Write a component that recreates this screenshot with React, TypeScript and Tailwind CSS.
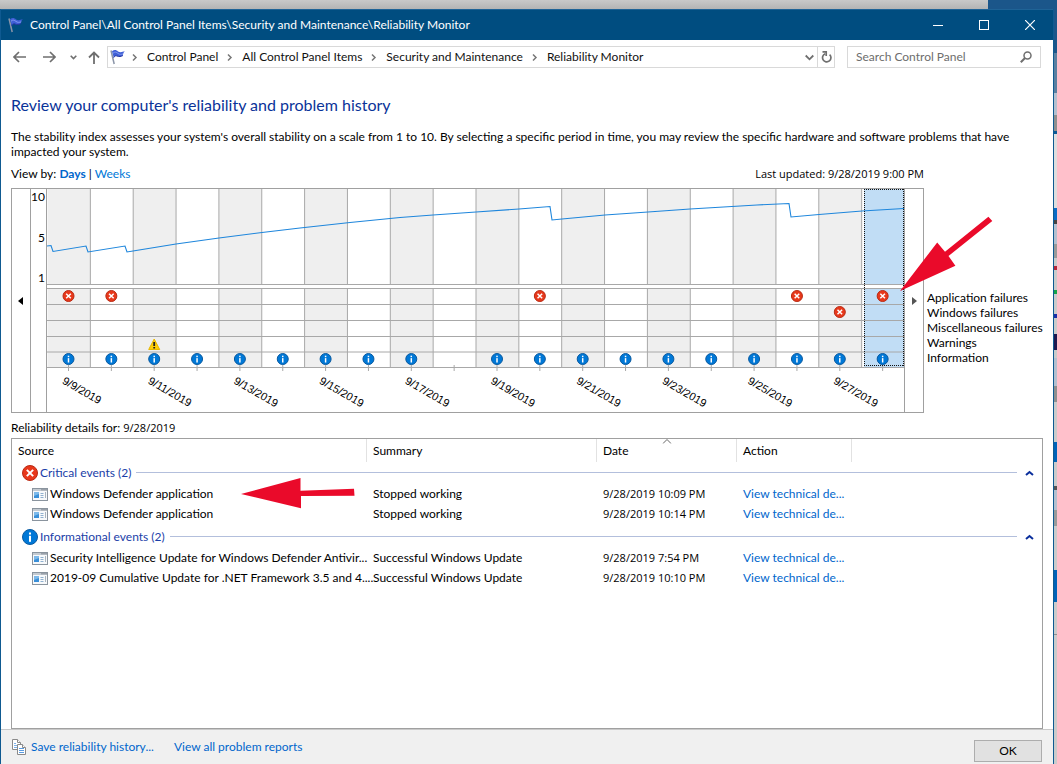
import React from 'react';

type EventRow = { source: string; summary: string; date: string };

const crumbs = ['Control Panel', 'All Control Panel Items', 'Security and Maintenance', 'Reliability Monitor'];

const legend = ['Application failures', 'Windows failures', 'Miscellaneous failures', 'Warnings', 'Information'];

const criticalEvents: EventRow[] = [
  { source: 'Windows Defender application', summary: 'Stopped working', date: '9/28/2019 10:09 PM' },
  { source: 'Windows Defender application', summary: 'Stopped working', date: '9/28/2019 10:14 PM' },
];

const infoEvents: EventRow[] = [
  {
    source: 'Security Intelligence Update for Windows Defender Antivir...',
    summary: 'Successful Windows Update',
    date: '9/28/2019 7:54 PM',
  },
  {
    source: '2019-09 Cumulative Update for .NET Framework 3.5 and 4....',
    summary: 'Successful Windows Update',
    date: '9/28/2019 10:10 PM',
  },
];

// Chart geometry, in viewBox units
const COLUMN = 42.85;
const DAYS = Array.from({ length: 20 }, (_, i) => i);
const ROW_LINES = [99.5, 115.5, 131.5, 147.5, 163, 178.5];
const APP_FAILURES = [0, 1, 11, 17, 19];
const WINDOWS_FAILURES = [18];
const WARNINGS = [2];
const NO_INFO = [9];

const STABILITY =
  '0,57 4,56.5 6,62.5 39,57 41,63 78,57 80,63 86,62 129,55 172,49 215,43.5 253,39 303,33.5 353,28.5 386,26 429,23 472,20 503,17.5 505,31 515,30 558,26 601,23 643,20 710,16 742,14.5 744,28 772,25.5 815,22 857,19.5';

const columnX = (i: number) => 0.5 + i * COLUMN;
const centerX = (i: number) => columnX(i) + 21;

function FlagIcon() {
  return (
    <svg width="16" height="16" viewBox="0 0 16 16" className="shrink-0" aria-hidden="true">
      <path d="M1 1.500 4.200 15" stroke="#8b95a8" strokeWidth="1.500" fill="none" />
      <path d="M2 2.200C4.500.2 6.500 1 8 2.400c1.800 1.200 4 .8 6.800-.1-1.400 1.200-2 2.400-1.900 4.200-2 1.200-4 1.400-5.800.5C5.800 6.300 4.700 7 3.800 9z" fill="#3f5fd6" />
      <path d="M3 4.200c2-1.800 3.500-1 5 .2s3.400 1.200 5.300.4" stroke="#8098f0" strokeWidth="1" fill="none" />
      <path d="M3.700 8.500c1-1.800 2-2 3.300-1.500 2 .9 4 .7 5.900-.5" stroke="#2638a3" strokeWidth="1" fill="none" />
    </svg>
  );
}

function CriticalIcon({ x = 8, y = 8, r = 7.5 }: { x?: number; y?: number; r?: number }) {
  const d = r * 0.42;
  return (
    <g>
      <circle cx={x} cy={y} r={r} fill="#e8381b" stroke="#b92b14" strokeWidth="1" />
      <path
        d={`M${x - d} ${y - d}L${x + d} ${y + d}M${x + d} ${y - d}L${x - d} ${y + d}`}
        stroke="#fff"
        strokeWidth={r * 0.27}
      />
    </g>
  );
}

function InfoIcon({ x = 8, y = 8, r = 7.5 }: { x?: number; y?: number; r?: number }) {
  const w = r * 0.27;
  return (
    <g>
      <circle cx={x} cy={y} r={r} fill="#0078d7" stroke="#0a5aa0" strokeWidth="1" />
      <rect x={x - w / 2} y={y - r * 0.16} width={w} height={r * 0.8} fill="#fff" />
      <rect x={x - w / 2} y={y - r * 0.6} width={w} height={w} fill="#fff" />
    </g>
  );
}

function AppIcon() {
  return (
    <svg width="16" height="13" viewBox="0 0 16 13" className="shrink-0" aria-hidden="true">
      <rect x=".5" y=".5" width="15" height="12" fill="#f7f9fb" stroke="#8a949e" />
      <path d="M1 2h14" stroke="#c3cad1" strokeWidth="2" />
      <path d="M9.500 1.800h1M11.500 1.800h1M13.500 1.800h1" stroke="#4a5560" />
      <rect x="2" y="4" width="5" height="6" fill="#3a8fd8" />
      <path d="M2 4h5v2L2 8z" fill="#7cb9ea" />
      <path d="M8.500 5.500h3M8.500 7.500h3M8.500 9.500h3" stroke="#8fb0cf" />
      <path d="M13.500 4v6" stroke="#a9b4be" />
    </svg>
  );
}

function Crumb({ label }: { label: string }) {
  return (
    <li className="flex items-center gap-2">
      <svg width="9" height="9" viewBox="0 0 9 9" fill="none" stroke="#777" strokeWidth="1.500" aria-hidden="true">
        <path d="M3 1.500 6 4.500 3 7.500" />
      </svg>
      <a href="#" className="text-[#111]">
        {label}
      </a>
    </li>
  );
}

function TitleBar() {
  return (
    <header className="flex h-[31px] items-center border-t border-[#1f6396] bg-[#004d80] text-white">
      <div className="flex flex-1 items-center gap-1.5 pl-[7px]">
        <FlagIcon />
        <span>Control Panel\All Control Panel Items\Security and Maintenance\Reliability Monitor</span>
      </div>
      <button type="button" aria-label="Minimize" className="flex h-full w-[46px] items-center justify-center">
        <svg width="10" height="11" viewBox="0 0 10 11" stroke="#fff">
          <path d="M0 5.500h10" />
        </svg>
      </button>
      <button type="button" aria-label="Maximize" className="flex h-full w-[46px] items-center justify-center">
        <svg width="10" height="10" viewBox="0 0 10 10" stroke="#fff" fill="none">
          <rect x=".5" y=".5" width="9" height="9" />
        </svg>
      </button>
      <button type="button" aria-label="Close" className="flex h-full w-[46px] items-center justify-center">
        <svg width="10" height="10" viewBox="0 0 10 10" stroke="#fff" strokeWidth="1.200">
          <path d="M0 0l10 10M10 0 0 10" />
        </svg>
      </button>
    </header>
  );
}

function NavBar() {
  return (
    <nav className="flex h-[34px] items-center pr-3 pl-3">
      <div className="flex items-center text-[#6f6f6f]">
        <button type="button" aria-label="Back" className="flex w-[14px] justify-start">
          <svg width="13" height="12" viewBox="0 0 13 12" fill="none" stroke="currentColor" strokeWidth="1.700">
            <path d="M13 6H1M6 1 1 6l5 5" />
          </svg>
        </button>
        <button type="button" aria-label="Forward" className="ml-4 flex w-[14px] justify-start">
          <svg width="13" height="12" viewBox="0 0 13 12" fill="none" stroke="currentColor" strokeWidth="1.700">
            <path d="M0 6h12M7 1l5 5-5 5" />
          </svg>
        </button>
        <button type="button" aria-label="Recent locations" className="ml-3 flex w-2 justify-center">
          <svg width="7" height="5" viewBox="0 0 7 5" fill="none" stroke="currentColor" strokeWidth="1.600">
            <path d="M.7.8 3.500 3.600 6.300.8" />
          </svg>
        </button>
        <button type="button" aria-label="Up" className="ml-[11px] flex w-3 justify-center">
          <svg width="12" height="13" viewBox="0 0 12 13" fill="none" stroke="currentColor" strokeWidth="1.800" className="shrink-0">
            <path d="M6 13V1.500M1 6.500l5-5 5 5" />
          </svg>
        </button>
      </div>

      <div className="ml-[7px] flex h-[22px] flex-1 border border-[#d9d9d9]">
        <div className="flex flex-1 items-center gap-1 pl-0.5">
          <FlagIcon />
          <ol className="flex items-center gap-[7px]">
            {crumbs.map((label) => (
              <Crumb key={label} label={label} />
            ))}
          </ol>
        </div>
        <button type="button" aria-label="Previous locations" className="flex w-4 items-center justify-center text-[#6f6f6f]">
          <svg width="9" height="7" viewBox="0 0 9 7" fill="none" stroke="currentColor" strokeWidth="1.800">
            <path d="M.7 1.500 4.500 5.300 8.300 1.500" />
          </svg>
        </button>
        <button
          type="button"
          aria-label="Refresh"
          className="flex w-[17px] items-center justify-center border-l border-[#d9d9d9] text-[#6f6f6f]"
        >
          <svg width="11" height="12" viewBox="0 0 11 12" fill="none" stroke="currentColor" strokeWidth="1.700">
            <path d="M8.600 3.600A4.200 4.200 0 1 1 4.200 2.800" />
            <path d="M1.500.9h3.700v4" />
          </svg>
        </button>
      </div>

      <div className="ml-3 flex h-[22px] w-[194px] items-center border border-[#d9d9d9] pr-2 pl-2">
        <input
          type="text"
          aria-label="Search Control Panel"
          placeholder="Search Control Panel"
          className="min-w-0 flex-1 bg-transparent outline-none placeholder:text-[#6d6d6d]"
        />
        <svg width="12" height="12" viewBox="0 0 12 12" fill="none" stroke="#6f6f6f" strokeWidth="1.500" aria-hidden="true">
          <circle cx="7.500" cy="4.500" r="3.500" />
          <path d="M5 7 .8 11.200" strokeWidth="2" />
        </svg>
      </div>
    </nav>
  );
}

function StabilityPlot() {
  return (
    <svg viewBox="0 0 857 223" className="block min-w-0 flex-1" role="img" aria-label="Stability index by day">
      {DAYS.filter((i) => i % 2 === 0).map((i) => (
        <rect key={i} x={columnX(i)} y="0" width={COLUMN} height="178" fill="#efefef" />
      ))}
      <rect x="817" y="0" width="40" height="178" fill="#c1ddf5" />
      {DAYS.slice(1).map((i) => (
        <path key={i} d={`M${columnX(i)} 0V178`} stroke="#a8a8a8" />
      ))}
      <rect x="0" y="96" width="857" height="3" fill="#fff" />
      <path d="M0 95.500h857" stroke="#a8a8a8" />
      {ROW_LINES.map((y) => (
        <path key={y} d={`M0 ${y}h857`} stroke="#a8a8a8" />
      ))}
      <polyline points={STABILITY} fill="none" stroke="#1e86dc" strokeWidth="1.100" />

      {DAYS.map((i) => (
        <path key={i} d={`M${centerX(i)} 176v6`} stroke="#a8a8a8" />
      ))}
      {APP_FAILURES.map((i) => (
        <CriticalIcon key={i} x={centerX(i)} y={107} r={5.5} />
      ))}
      {WINDOWS_FAILURES.map((i) => (
        <CriticalIcon key={i} x={centerX(i)} y={123} r={5.5} />
      ))}
      {WARNINGS.map((i) => (
        <g key={i}>
          <path d={`M${centerX(i)} 150l5.500 10.500h-11z`} fill="#ffcf0a" stroke="#e8b800" strokeLinejoin="round" />
          <path d={`M${centerX(i)} 153v4M${centerX(i)} 158v1.600`} stroke="#222" strokeWidth="1.800" />
        </g>
      ))}
      {DAYS.filter((i) => !NO_INFO.includes(i)).map((i) => (
        <InfoIcon key={i} x={centerX(i)} y={170} r={5.5} />
      ))}

      <path
        d="M817 .5h40M817 176.500h40M817.500 0v177M856.500 0v177"
        fill="none"
        stroke="#111"
        strokeDasharray="1 1"
        shapeRendering="crispEdges"
      />

      {DAYS.filter((i) => i % 2 === 0 && i < 19).map((i) => (
        <text
          key={i}
          transform={`translate(${centerX(i) - 7} 194) rotate(30)`}
          className="fill-black font-['Liberation_Sans',sans-serif] text-[11px]"
        >
          {`9/${9 + i}/2019`}
        </text>
      ))}
    </svg>
  );
}

function StabilityChart() {
  return (
    <section className="relative mt-1.5 flex">
      <div className="flex min-w-0 flex-1 border border-[#a0a0a0]">
        <button type="button" aria-label="Earlier" className="flex w-[19px] items-center justify-center border-r border-[#a0a0a0] pr-0.5">
          <svg width="5" height="8" viewBox="0 0 5 8">
            <path d="M5 0v8L0 4z" />
          </svg>
        </button>
        <div className="w-4 border-r border-[#a0a0a0]">
          <div className="flex h-[97px] flex-col items-end justify-between pr-px leading-4">
            <span>10</span>
            <span>5</span>
            <span>1</span>
          </div>
        </div>
        <StabilityPlot />
        <button type="button" aria-label="Later" className="flex w-[19px] items-center justify-center border-l border-[#a0a0a0]">
          <svg width="5" height="8" viewBox="0 0 5 8" fill="#555">
            <path d="M0 0v8l5-4z" />
          </svg>
        </button>
      </div>
      <ul className="w-[119px] pt-[102px] pl-[3px] leading-[15px] whitespace-nowrap">
        {legend.map((label) => (
          <li key={label}>{label}</li>
        ))}
      </ul>
      <svg width="94" height="76" viewBox="0 0 94 76" className="absolute top-7 right-[49px]" aria-hidden="true">
        <path d="M0 75 37.200 26.500 45 35.700 88.400.7 92.300 5 48.500 40 55.400 49.700z" fill="#ea0a2a" />
      </svg>
    </section>
  );
}

function GroupRow({ label, icon }: { label: string; icon: React.ReactNode }) {
  return (
    <tr>
      <th colSpan={5} scope="colgroup" className="p-0 pb-px font-normal">
        <div className="flex h-[21px] items-center pr-2 pl-2.5 text-[#1a3ea8]">
          <svg width="16" height="16" viewBox="0 0 16 16" className="shrink-0" aria-hidden="true">
            {icon}
          </svg>
          <span className="ml-0.5">{label}</span>
          <span className="ml-[5px] h-px flex-1 bg-[#b3bfdc]" />
          <button type="button" aria-label={`Collapse ${label}`} className="ml-2 flex">
            <svg width="9" height="6" viewBox="0 0 9 6" fill="none" stroke="#0a2f9c" strokeWidth="2">
              <path d="M1 5l3.500-3L8 5" />
            </svg>
          </button>
        </div>
      </th>
    </tr>
  );
}

function EventRows({ rows }: { rows: EventRow[] }) {
  return (
    <>
      {rows.map((row) => (
        <tr key={row.date} className="h-5">
          <td className="p-0">
            <div className="flex items-center gap-0.5 pl-5 whitespace-nowrap">
              <AppIcon />
              <span>{row.source}</span>
            </div>
          </td>
          <td className="p-0 pl-1.5">{row.summary}</td>
          <td className="p-0 pl-1.5 font-['Open_Sans',sans-serif] text-[11px]">{row.date}</td>
          <td className="p-0 pl-1.5">
            <a href="#" className="text-[#0066cc]">
              View technical de...
            </a>
          </td>
          <td className="p-0" />
        </tr>
      ))}
    </>
  );
}

function DetailsTable() {
  return (
    <div className="relative mt-0.5 flex-1 border border-[#a0a0a0]">
      <table className="w-full table-fixed border-separate border-spacing-0 text-left leading-4">
        <colgroup>
          <col className="w-[355px]" />
          <col className="w-[230px]" />
          <col className="w-[140px]" />
          <col className="w-[115px]" />
          <col />
        </colgroup>
        <thead>
          <tr className="h-[23px]">
            <th scope="col" className="border-r border-[#e2e2e2] p-0 pl-1.5 font-normal">Source</th>
            <th scope="col" className="border-r border-[#e2e2e2] p-0 pl-1.5 font-normal">Summary</th>
            <th scope="col" className="relative border-r border-[#e2e2e2] p-0 pl-1.5 font-normal">
              Date
              <svg
                width="9"
                height="5"
                viewBox="0 0 9 5"
                fill="none"
                stroke="#666"
                className="absolute top-0 left-1/2 -translate-x-1/2"
                aria-hidden="true"
              >
                <path d="M.5 4.500l4-4 4 4" />
              </svg>
            </th>
            <th scope="col" className="border-r border-[#e2e2e2] p-0 pl-1.5 font-normal">Action</th>
            <td className="p-0" />
          </tr>
        </thead>
        <tbody>
          <GroupRow label="Critical events (2)" icon={<CriticalIcon />} />
          <EventRows rows={criticalEvents} />
        </tbody>
        <tbody>
          <tr className="h-0.5">
            <td colSpan={5} className="p-0" />
          </tr>
          <GroupRow label="Informational events (2)" icon={<InfoIcon />} />
          <EventRows rows={infoEvents} />
        </tbody>
      </table>
      <svg width="114" height="31" viewBox="0 0 114 31" className="absolute top-[39px] left-[229px]" aria-hidden="true">
        <path d="M0 16 59.500 0v12.700L113 10.700l.5 7L60 18v12.300z" fill="#ea0a2a" />
      </svg>
    </div>
  );
}

// Sliver of the desktop that shows past the window's right edge
function DesktopEdge() {
  return (
    <div className="flex w-[3px] flex-col bg-[#cbcbcb]" aria-hidden="true">
      <div className="h-11 bg-[#1b568a]" />
      <div className="h-10 bg-[#5a7fa0]" />
      <div className="h-[22px] bg-[#b5c0cf]" />
      <div className="h-4 bg-[#8f8f8f]" />
      <div className="h-[3px] bg-[#0a5a96]" />
      <div className="h-[74px] bg-[#dedede]" />
      <div className="h-3 bg-[#0a6cc6]" />
      <div className="h-1 bg-[#444]" />
      <div className="h-5 bg-[#b5c0cf]" />
      <div className="h-[14px] bg-[#9a9a9a]" />
      <div className="h-2" />
      <div className="h-1 bg-[#b5273a]" />
      <div className="h-5" />
      <div className="h-1 bg-[#17a34a]" />
      <div className="h-5" />
      <div className="h-1 bg-[#1b2fa8]" />
      <div className="h-4" />
      <div className="h-4 bg-[#1e1850]" />
      <div className="h-2" />
      <div className="h-7 bg-[#b5c0cf]" />
      <div className="h-4 bg-[#8f8f8f]" />
      <div className="h-10" />
      <div className="h-5 bg-[#0063b8]" />
      <div className="h-6" />
      <div className="h-1 bg-[#555]" />
      <div className="h-5 bg-[#b5c0cf]" />
      <div className="h-4 bg-[#9a9a9a]" />
      <div className="h-11" />
      <div className="h-8 bg-[#0063b8]" />
      <div className="h-8" />
      <div className="h-px bg-[#8f8f8f]" />
    </div>
  );
}

export default function App() {
  return (
    <div className="flex min-h-screen flex-col bg-white font-['Lato',sans-serif] text-[12px] leading-4 text-black">
      <div className="flex h-[9px]">
        <div className="flex-1 bg-linear-to-b from-[#c9c9c9] to-[#b4b4b4]" />
        <div className="w-[69px] bg-[#1b568a]" />
      </div>
      <div className="flex flex-1">
        <div className="flex min-w-0 flex-1 flex-col border-x border-[#0f5a91]">
          <TitleBar />
          <NavBar />
          <main className="flex flex-1 flex-col px-2.5">
            <h1 className="mt-[19px] text-[16px] leading-6 text-[#0a3399]">
              Review your computer's reliability and problem history
            </h1>
            <p className="mt-3 leading-[15px]">
              The stability index assesses your system's overall stability on a scale from 1 to 10. By selecting a specific
              period in time, you may review the specific hardware and software problems that have impacted your system.
            </p>
            <div className="mt-[7px] flex justify-between">
              <p>
                View by:{' '}
                <a href="#" className="font-bold text-[#0066cc]">
                  Days
                </a>{' '}
                |{' '}
                <a href="#" className="text-[#0078d7]">
                  Weeks
                </a>
              </p>
              <p className="mr-[119px] font-['Open_Sans',sans-serif] text-[11px]">Last updated: 9/28/2019 9:00 PM</p>
            </div>
            <StabilityChart />
            <h2 className="mt-[7px]">
              Reliability details for: <span className="font-['Open_Sans',sans-serif] text-[11px]">9/28/2019</span>
            </h2>
            <DetailsTable />
          </main>
          <footer className="flex h-[35px] items-center border-t border-[#c9c9c9] bg-[#f0f0f0] px-[11px]">
            <a href="#" className="flex items-center gap-1 text-[#0066cc]">
              <svg width="15" height="16" viewBox="0 0 15 16" fill="#fff" stroke="#8a8a8a" aria-hidden="true">
                <path d="M.5.500h5l3 3v7h-8z" />
                <path d="M5.500.5v3h3" />
                <path d="M2 4.500h2M2 6.500h3M2 8.500h3" stroke="#7fb2e8" />
                <path d="M5.500 5.500h5l3 3v7h-8z" />
                <path d="M10.500 5.500v3h3" />
                <path d="M7 9.500h5M7 11.500h5M7 13.500h5" stroke="#5a9be0" />
              </svg>
              Save reliability history...
            </a>
            <a href="#" className="ml-5 text-[#0066cc]">
              View all problem reports
            </a>
            <button
              type="button"
              className="mb-0.5 ml-auto h-[22px] w-[68px] self-end border border-[#adadad] bg-[#e1e1e1]"
            >
              OK
            </button>
          </footer>
        </div>
        <DesktopEdge />
      </div>
    </div>
  );
}
